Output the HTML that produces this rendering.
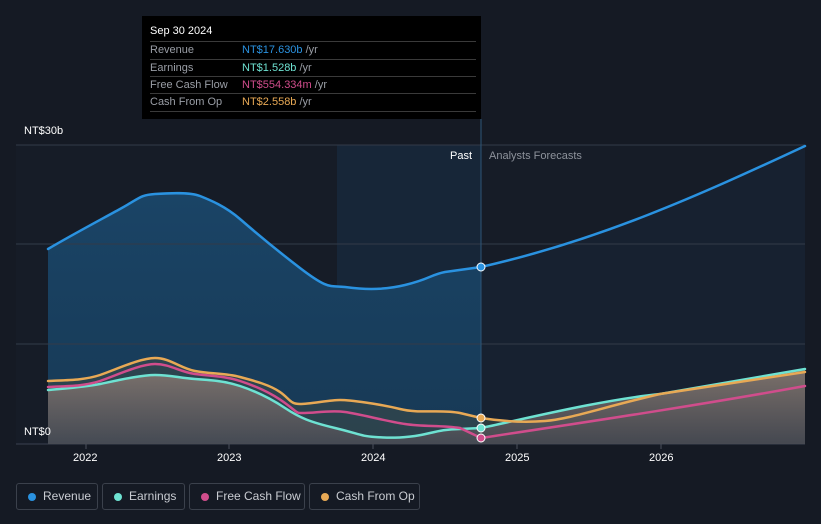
<!DOCTYPE html>
<html><head><style>
body{margin:0;width:821px;height:524px;background:#151a24;font-family:"Liberation Sans",sans-serif;overflow:hidden;position:relative}
.t{position:absolute;font-size:11px;color:#fff}
.leg{position:absolute;top:483px;height:27px;border:1px solid #3b414c;border-radius:3px;box-sizing:border-box;color:#c9ccd2;font-size:12px;line-height:25px;padding-left:26px}
.leg i{position:absolute;left:11px;top:9px;width:8px;height:8px;border-radius:50%}
.tip{position:absolute;left:142px;top:16px;width:339px;height:103px;background:#000;font-size:11px}
.tip .r{position:absolute;left:8px;width:326px;border-top:1px solid #3a3a3a;height:17px;line-height:17px;color:#9a9ea6}
.tip .r span{position:absolute;left:92px}
.tip .r em{font-style:normal;color:#9a9ea6}
</style></head><body>
<svg width="821" height="524" style="position:absolute;left:0;top:0">
<defs>
<linearGradient id="rv" x1="0" y1="0" x2="0" y2="1"><stop offset="0" stop-color="#1a4466"/><stop offset="1" stop-color="#173955"/></linearGradient>
<linearGradient id="gr" x1="0" y1="0" x2="0" y2="1"><stop offset="0" stop-color="#8a7a72" stop-opacity=".85"/><stop offset="1" stop-color="#4b4c55" stop-opacity=".8"/></linearGradient>
</defs>
<rect x="16" y="145" width="789" height="299" fill="#161c27"/>
<rect x="337" y="145" width="144" height="299" fill="#172638"/>
<path d="M48,249 C70,236 100,220 120,209 S140,195 155,194 S190,192 200,196 S225,206 240,219 S270,245 300,268 S330,285 345,287 S380,291 405,285 S430,275 445,272 L481,267 L481,444 L48,444Z" fill="url(#rv)"/>
<path d="M481,267 C600,240 700,195 805,146 L805,444 L481,444Z" fill="#172130"/>
<g stroke="#333b48" stroke-width="1"><line x1="16" y1="145" x2="805" y2="145"/><line x1="16" y1="244" x2="805" y2="244"/><line x1="16" y1="344" x2="805" y2="344"/><line x1="16" y1="444" x2="805" y2="444" stroke="#3a4150"/></g>
<line x1="481" y1="119" x2="481" y2="444" stroke="#2d5577"/>
<path d="M48,381 C70,380 85,380 100,375 S140,358 155,358 S180,368 195,371 S225,373 240,377 S270,385 280,392 S290,404 300,404 S330,400 340,400 S380,404 400,409 S440,409 460,413 L481,418 C500,421 520,423 545,421 S600,408 660,394 L805,372 L805,444 L48,444Z" fill="#3a4a48" opacity=".6"/>
<path d="M48,390 C70,388 85,387 100,384 S140,375 155,375 S180,378 195,379 S225,381 240,386 S270,398 285,408 S310,422 335,428 S360,436 375,437 S400,438 415,436 S440,429 460,429 L481,428 C520,420 600,400 660,394 L805,369 L805,444 L48,444Z" fill="url(#gr)"/>
<g fill="none" stroke-width="2.5" stroke-linecap="round">
<path d="M48,249 C70,236 100,220 120,209 S140,195 155,194 S190,192 200,196 S225,206 240,219 S270,245 300,268 S330,285 345,287 S380,291 405,285 S430,275 445,272 L481,267 C600,240 700,195 805,146" stroke="#2a92e0"/>
<path d="M48,390 C70,388 85,387 100,384 S140,375 155,375 S180,378 195,379 S225,381 240,386 S270,398 285,408 S310,422 335,428 S360,436 375,437 S400,438 415,436 S440,429 460,429 L481,428 C520,420 600,400 660,394 L805,369" stroke="#6ee2d2"/>
<path d="M48,387 C70,386 85,386 100,381 S140,364 155,364 S180,372 195,374 S225,376 240,381 S270,392 285,403 S295,413 305,413 S330,410 345,412 S385,421 405,424 S440,425 460,428 L481,438 C600,420 700,405 805,386" stroke="#d04d8c"/>
<path d="M48,381 C70,380 85,380 100,375 S140,358 155,358 S180,368 195,371 S225,373 240,377 S270,385 280,392 S290,404 300,404 S330,400 340,400 S380,404 400,409 S440,409 460,413 L481,418 C500,421 520,423 545,421 S600,408 660,394 L805,372" stroke="#e8a955"/>
</g>
<g stroke="#fff" stroke-width="1"><circle cx="481" cy="267" r="4" fill="#2a92e0"/><circle cx="481" cy="418" r="4" fill="#e8a955"/><circle cx="481" cy="428" r="4" fill="#6ee2d2"/><circle cx="481" cy="438" r="4" fill="#d04d8c"/></g>
<g stroke="#4a505c"><line x1="86" y1="444" x2="86" y2="449"/><line x1="229" y1="444" x2="229" y2="449"/><line x1="373" y1="444" x2="373" y2="449"/><line x1="517" y1="444" x2="517" y2="449"/><line x1="661" y1="444" x2="661" y2="449"/></g>
</svg>
<div class="t" style="left:24px;top:125px">NT$30b</div>
<div class="t" style="left:24px;top:426px">NT$0</div>
<div class="t" style="left:450px;top:150px">Past</div>
<div class="t" style="left:489px;top:150px;color:#8d929b">Analysts Forecasts</div>
<div class="t" style="left:73px;top:452px">2022</div>
<div class="t" style="left:217px;top:452px">2023</div>
<div class="t" style="left:361px;top:452px">2024</div>
<div class="t" style="left:505px;top:452px">2025</div>
<div class="t" style="left:649px;top:452px">2026</div>
<div class="tip">
<div style="position:absolute;left:8px;top:9px;color:#fff">Sep 30 2024</div>
<div class="r" style="top:25px">Revenue<span><b style="font-weight:normal;color:#2a92e0">NT$17.630b</b> <em>/yr</em></span></div>
<div class="r" style="top:43px">Earnings<span><b style="font-weight:normal;color:#6ee2d2">NT$1.528b</b> <em>/yr</em></span></div>
<div class="r" style="top:60px">Free Cash Flow<span><b style="font-weight:normal;color:#d04d8c">NT$554.334m</b> <em>/yr</em></span></div>
<div class="r" style="top:77px">Cash From Op<span><b style="font-weight:normal;color:#e8a955">NT$2.558b</b> <em>/yr</em></span></div>
<div class="r" style="top:95px;height:0"></div>
</div>
<div class="leg" style="left:16px;width:82px"><i style="background:#2a92e0"></i>Revenue</div>
<div class="leg" style="left:102px;width:83px"><i style="background:#6ee2d2"></i>Earnings</div>
<div class="leg" style="left:189px;width:116px"><i style="background:#d04d8c"></i>Free Cash Flow</div>
<div class="leg" style="left:309px;width:111px"><i style="background:#e8a955"></i>Cash From Op</div>
</body></html>
